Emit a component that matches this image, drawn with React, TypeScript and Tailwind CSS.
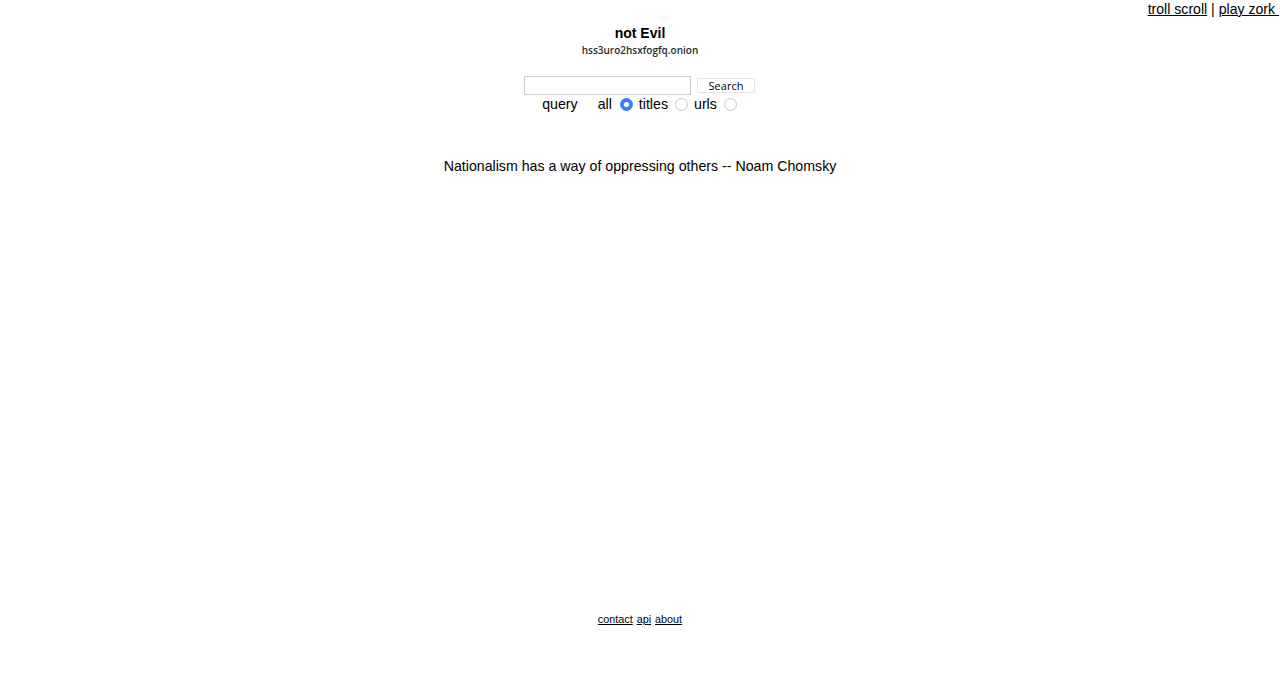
import React from "react";

function Radio({ checked }: { checked?: boolean }) {
  return checked ? (
    <span className="block w-[13px] h-[13px] rounded-full bg-[#3b82f6] border border-[#3b82f6] relative">
      <span className="absolute left-[3px] top-[3px] w-[5px] h-[5px] rounded-full bg-white" />
    </span>
  ) : (
    <span className="block w-[13px] h-[13px] rounded-full border border-[#c8c8c8] bg-white" />
  );
}

export default function App() {
  return (
    <div className="relative w-[1280px] h-[688px] bg-white text-black font-['Liberation_Sans',Arial,sans-serif]">
      <div className="absolute right-[1px] top-[0px] text-[14.1px] leading-[18px]">
        <a className="underline" href="#">troll scroll</a> | <a className="underline" href="#">play zork&nbsp;</a>
      </div>
      <div className="flex flex-col items-center pt-[24px]">
        <div className="font-bold text-[14px] leading-[18px]">not Evil</div>
        <div className="text-[10px] leading-[14px] text-[#2a2a2a] font-semibold font-['Open_Sans',sans-serif] mt-[1px]">hss3uro2hsxfogfq.onion</div>
        <div className="flex items-center mt-[19px] ml-[-1px]">
          <div className="w-[167px] h-[19px] border border-[#cccccc] bg-white" />
          <div className="ml-[6px] w-[58px] h-[15px] border border-[#e4e4e4] rounded-[2px] bg-white text-[11px] leading-[13px] flex items-center justify-center font-['Open_Sans',sans-serif]">Search</div>
        </div>
        <div className="flex items-center text-[14.2px] leading-[18px] ml-[-1px]">
          <span>query</span>
          <span className="ml-[20px]">all</span>
          <span className="ml-[8px]"><Radio checked /></span>
          <span className="ml-[6px]">titles</span>
          <span className="ml-[7px]"><Radio /></span>
          <span className="ml-[6px]">urls</span>
          <span className="ml-[7px]"><Radio /></span>
        </div>
        <div className="mt-[44px] text-[14.2px] leading-[18px]">Nationalism has a way of oppressing others -- Noam Chomsky</div>
      </div>
      <div className="absolute left-0 right-0 top-[612px] flex justify-center gap-[4px] text-[10.8px] leading-[14px]">
        <a className="underline" href="#">contact</a>
        <a className="underline" href="#">api</a>
        <a className="underline" href="#">about</a>
      </div>
    </div>
  );
}
